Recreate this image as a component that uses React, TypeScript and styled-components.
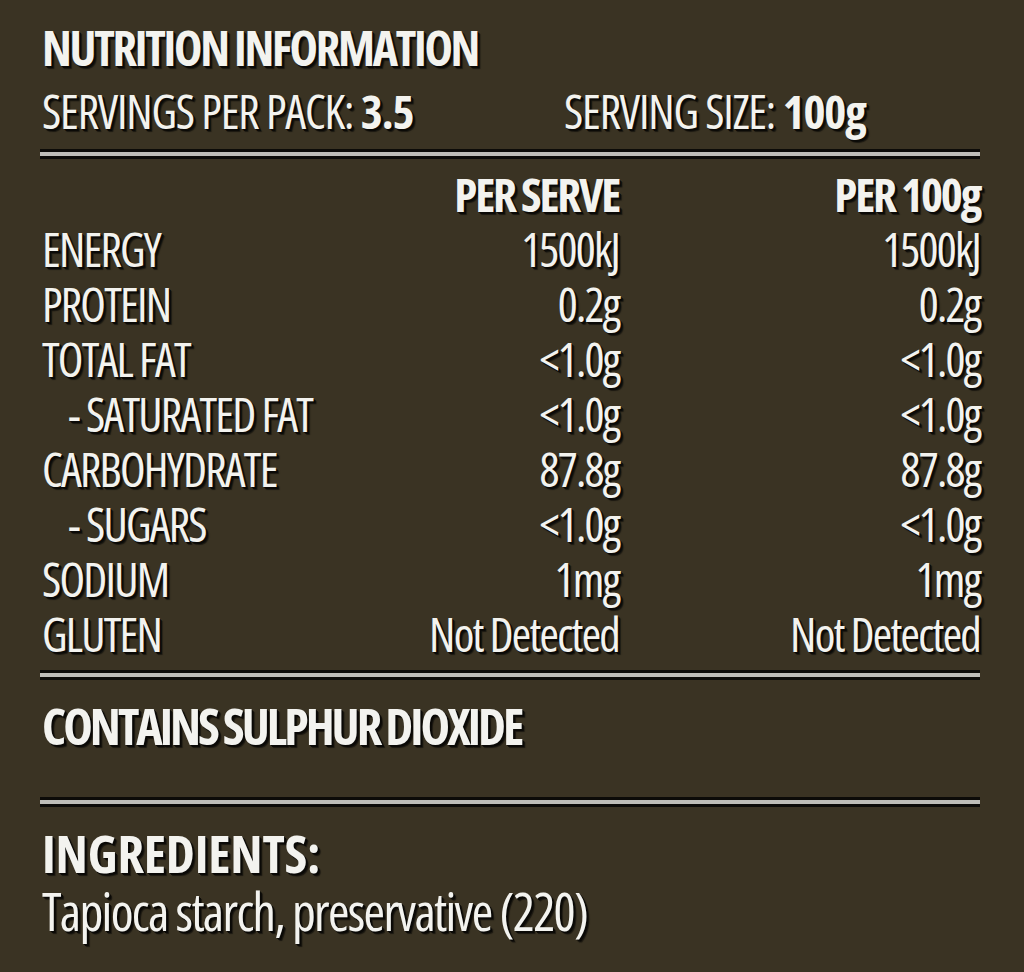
import React from "react";
import styled, { createGlobalStyle } from "styled-components";

const GlobalStyle = createGlobalStyle`
  html, body { margin: 0; padding: 0; }
  body {
    background: #3a3323;
    width: 1024px;
    height: 972px;
    overflow: hidden;
  }
`;

const Panel = styled.div`
  box-sizing: border-box;
  width: 1024px;
  height: 972px;
  background: #3a3323;
  padding: 20px 44px 0 42px;
  color: #f3f3ef;
  font-family: "Open Sans", "DejaVu Sans Condensed", sans-serif;
  font-stretch: 75%;
  text-shadow: 1px 1px 0 #0b0a07, 2px 2px 0 #0b0a07, 3px 3px 1px rgba(0, 0, 0, 0.55);
`;

const Title = styled.div`
  font-size: 48px;
  line-height: 55px;
  font-weight: 700;
  letter-spacing: -2.3px;
  white-space: nowrap;
`;

const ServingsRow = styled.div`
  display: flex;
  margin-top: 9px;
  font-size: 47px;
  line-height: 55px;
  font-weight: 400;
  letter-spacing: -1.2px;
  white-space: nowrap;
`;

const ServingItem = styled.div<{ $width?: number }>`
  flex: 0 0 ${(p) => (p.$width ? `${p.$width}px` : "auto")};
`;

const Strong = styled.b`
  font-weight: 700;
`;

const Divider = styled.div<{ $top: number }>`
  margin: ${(p) => p.$top}px 0 0 -2px;
  height: 4px;
  background: #bebdb8;
  border-top: 3px solid #0c0b08;
  border-bottom: 3px solid #0c0b08;
`;

const Table = styled.div`
  margin-top: 8px;
  display: grid;
  grid-template-columns: 1fr 240px 361px;
  grid-auto-rows: 55px;
  font-size: 47px;
  line-height: 55px;
  letter-spacing: -1.8px;
  white-space: nowrap;
`;

const Cell = styled.div<{ $align?: "left" | "right"; $bold?: boolean; $indent?: number }>`
  text-align: ${(p) => p.$align || "left"};
  font-weight: ${(p) => (p.$bold ? 700 : 400)};
  padding-left: ${(p) => p.$indent || 0}px;
  letter-spacing: ${(p) => (p.$bold ? "-2.2px" : "inherit")};
`;

const Notice = styled.div<{ $top: number; $spacing: number; $size: number }>`
  margin-top: ${(p) => p.$top}px;
  font-size: ${(p) => p.$size}px;
  line-height: 55px;
  font-weight: 700;
  letter-spacing: ${(p) => p.$spacing}px;
  white-space: nowrap;
`;

const Ingredients = styled.div`
  margin-top: 3px;
  font-size: 52px;
  line-height: 55px;
  font-weight: 400;
  letter-spacing: -1.7px;
  white-space: nowrap;
`;

type Row = { label: string; serve: string; per100: string; indent?: boolean };

const rows: Row[] = [
  { label: "ENERGY", serve: "1500kJ", per100: "1500kJ" },
  { label: "PROTEIN", serve: "0.2g", per100: "0.2g" },
  { label: "TOTAL FAT", serve: "<1.0g", per100: "<1.0g" },
  { label: "- SATURATED FAT", serve: "<1.0g", per100: "<1.0g", indent: true },
  { label: "CARBOHYDRATE", serve: "87.8g", per100: "87.8g" },
  { label: "- SUGARS", serve: "<1.0g", per100: "<1.0g", indent: true },
  { label: "SODIUM", serve: "1mg", per100: "1mg" },
  { label: "GLUTEN", serve: "Not Detected", per100: "Not Detected" },
];

export default function App() {
  return (
    <Panel>
      <GlobalStyle />
      <Title>NUTRITION INFORMATION</Title>
      <ServingsRow>
        <ServingItem $width={522}>
          SERVINGS PER PACK: <Strong>3.5</Strong>
        </ServingItem>
        <ServingItem>
          SERVING SIZE: <Strong>100g</Strong>
        </ServingItem>
      </ServingsRow>
      <Divider $top={10} />
      <Table>
        <Cell />
        <Cell $align="right" $bold>
          PER SERVE
        </Cell>
        <Cell $align="right" $bold>
          PER 100g
        </Cell>
        {rows.map((r) => (
          <React.Fragment key={r.label}>
            <Cell $indent={r.indent ? 26 : 0}>{r.label}</Cell>
            <Cell $align="right">{r.serve}</Cell>
            <Cell $align="right">{r.per100}</Cell>
          </React.Fragment>
        ))}
      </Table>
      <Divider $top={8} />
      <Notice $top={19} $spacing={-3} $size={50}>
        CONTAINS SULPHUR DIOXIDE
      </Notice>
      <Divider $top={43} />
      <Notice $top={18} $spacing={-0.2} $size={52}>
        INGREDIENTS:
      </Notice>
      <Ingredients>Tapioca starch, preservative (220)</Ingredients>
    </Panel>
  );
}
